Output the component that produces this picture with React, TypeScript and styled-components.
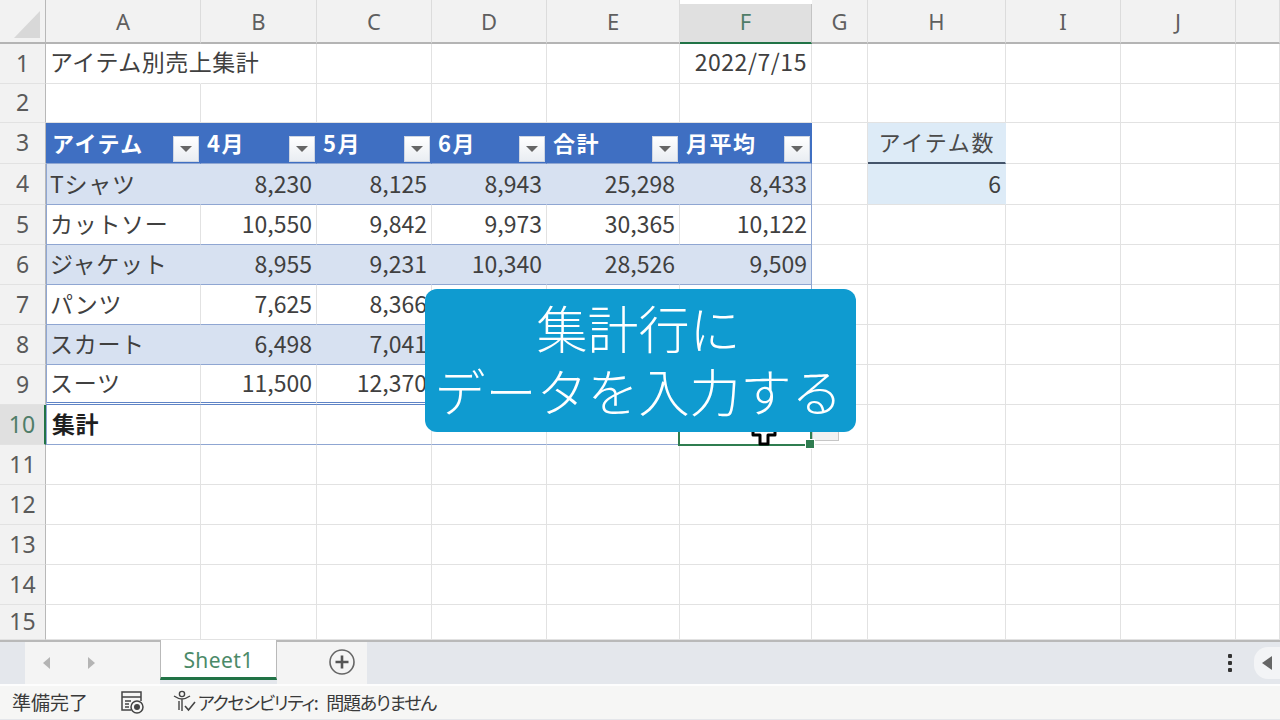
import styled, { createGlobalStyle } from "styled-components";

const GlobalStyle = createGlobalStyle`
  html, body {
    margin: 0;
    padding: 0;
    background: #fff;
  }
  body {
    font-family: "Noto Sans CJK JP", "Noto Sans", sans-serif;
  }
`;

const Page = styled.div`
  width: 1280px;
  height: 720px;
  display: flex;
  flex-direction: column;
  overflow: hidden;
  position: relative;
`;

const Sheet = styled.div`
  height: 640px;
  display: grid;
  grid-template-columns: 46px 155px 116px 115px 115px 133px 132px 56px 138px 115px 115px 44px;
  grid-template-rows: 44px 40px 39px 41px 41px 40px 40px 40px 40px 40px 40px 40px 40px 40px 40px 35px;
  overflow: hidden;
`;

const Corner = styled.div`
  background: #f2f2f2;
  border-right: 1px solid #b8b8b8;
  border-bottom: 2px solid #b4b4b4;
  box-sizing: border-box;
  display: flex;
  align-items: flex-end;
  justify-content: flex-end;
  padding: 0 5px 4px 0;
`;

const CornerMark = styled.div`
  width: 26px;
  height: 27px;
  background: #d8d8d8;
  clip-path: polygon(100% 0, 100% 100%, 0 100%);
`;

const ColHead = styled.div<{ $active?: boolean }>`
  box-sizing: border-box;
  background: ${(p) => (p.$active ? "#e0e0e0" : "#f2f2f2")};
  border-right: 1px solid ${(p) => (p.$active ? "#c4c4c4" : "#dcdcdc")};
  border-bottom: 2px solid ${(p) => (p.$active ? "#217346" : "#b4b4b4")};
  margin-top: ${(p) => (p.$active ? "4px" : "0")};
  padding-top: ${(p) => (p.$active ? "0" : "4px")};
  padding-bottom: 4px;
  display: flex;
  align-items: center;
  justify-content: center;
  font-family: "Noto Sans", sans-serif;
  font-size: 22px;
  color: ${(p) => (p.$active ? "#4f7d68" : "#5f5f5f")};
`;

const RowHead = styled.div<{ $active?: boolean }>`
  box-sizing: border-box;
  background: ${(p) => (p.$active ? "#e0e0e0" : "#f2f2f2")};
  border-right: ${(p) => (p.$active ? "2px solid #217346" : "1px solid #b8b8b8")};
  border-bottom: 1px solid #e2e2e2;
  padding-bottom: 2px;
  display: flex;
  align-items: center;
  justify-content: center;
  font-family: "Noto Sans", sans-serif;
  font-size: 23px;
  color: ${(p) => (p.$active ? "#4f7d68" : "#5a5a5a")};
`;

type Kind = "plain" | "band" | "white" | "total" | "head" | "kpiHead" | "kpi";

const cellBg: Record<Kind, string> = {
  plain: "#fff",
  band: "#d7e1f1",
  white: "#fff",
  total: "#fff",
  head: "#3f6fc2",
  kpiHead: "#ddebf7",
  kpi: "#ddebf7",
};

const tableLine = "#8fa6d2";

const Cell = styled.div<{ $kind?: Kind; $num?: boolean; $open?: boolean; $end?: boolean; $last?: boolean }>`
  position: relative;
  box-sizing: border-box;
  min-width: 0;
  padding: 0 4px 3px 5px;
  display: flex;
  align-items: center;
  justify-content: ${(p) => (p.$num ? "flex-end" : "flex-start")};
  white-space: nowrap;
  font-size: 23px;
  color: #404040;
  background: ${(p) => cellBg[p.$kind ?? "plain"]};
  z-index: ${(p) => (p.$open ? 1 : "auto")};
  border-right: 1px solid
    ${(p) => {
      if (p.$end) return tableLine;
      if (p.$open || p.$kind === "band" || p.$kind === "head") return "transparent";
      if (p.$kind === "kpiHead" || p.$kind === "kpi") return "transparent";
      return "#e2e2e2";
    }};
  border-bottom: ${(p) => {
    if (p.$last) return "3px double #5f84c6";
    if (p.$kind === "kpiHead") return "2px solid #44546a";
    if (p.$kind === "band" || p.$kind === "white" || p.$kind === "total" || p.$kind === "head")
      return `1px solid ${tableLine}`;
    return "1px solid #e2e2e2";
  }};
`;

const TitleCell = styled(Cell)`
  letter-spacing: 0.5px;
  padding-left: 4px;
  padding-bottom: 6px;
`;

const DateCell = styled(Cell)`
  letter-spacing: 0.55px;
  padding-bottom: 6px;
`;

const HeadCell = styled(Cell)`
  color: #fff;
  font-weight: 700;
  font-size: 22px;
  letter-spacing: 1.5px;
  padding: 0 0 3px 6px;
`;

const FirstCell = styled(Cell)`
  border-left: 1px solid ${tableLine};
  padding-left: 3px;
  letter-spacing: 0.7px;
`;

const TotalLabel = styled.span`
  font-weight: 700;
  color: #1f1f1f;
  font-size: 23px;
  letter-spacing: 0.5px;
  margin-left: 2px;
`;

const KpiLabel = styled.span`
  margin: 0 auto;
  font-size: 22px;
  letter-spacing: 1.8px;
  color: #4a4a4a;
`;

const FilterButton = styled.div`
  position: absolute;
  right: 1px;
  bottom: 1px;
  width: 26px;
  height: 26px;
  box-sizing: border-box;
  background: linear-gradient(#ffffff, #e9edf2);
  border: 1px solid #cfd6e2;
  display: flex;
  align-items: center;
  justify-content: center;

  &::after {
    content: "";
    border-left: 6px solid transparent;
    border-right: 6px solid transparent;
    border-top: 6px solid #666;
  }
`;

const Selection = styled.div`
  position: absolute;
  inset: -1px -1px -2px -2px;
  border: 2px solid #2f7d50;
  z-index: 2;

  &::after {
    content: "";
    position: absolute;
    right: -5px;
    bottom: -5px;
    width: 8px;
    height: 8px;
    background: #2f7d50;
    border: 1px solid #fff;
  }
`;

const CellDropButton = styled.div`
  position: absolute;
  left: calc(100% + 1px);
  bottom: 3px;
  width: 27px;
  height: 26px;
  box-sizing: border-box;
  background: #f1f1f1;
  border: 1px solid #c6c6c6;
  z-index: 1;
`;

const Pointer = styled.svg`
  position: absolute;
  left: 70px;
  bottom: -3px;
  width: 28px;
  height: 32px;
  z-index: 3;
`;

const Banner = styled.div`
  position: absolute;
  left: 425px;
  top: 289px;
  width: 431px;
  height: 143px;
  box-sizing: border-box;
  padding: 0 4px 4px 0;
  background: #0f9bd0;
  border-radius: 12px;
  display: flex;
  flex-direction: column;
  align-items: center;
  justify-content: center;
  color: #fff;
  font-size: 51px;
  font-weight: 300;
  line-height: 63px;
  z-index: 5;
`;

const TabBar = styled.div`
  height: 44px;
  box-sizing: border-box;
  display: flex;
  align-items: stretch;
  background: #e4e7ec;
  border-top: 2px solid #b9b9b9;
  position: relative;
`;

const TabNav = styled.div`
  width: 135px;
  margin-left: 25px;
  background: #f4f4f4;
  display: flex;
  align-items: center;
  gap: 34px;
  padding-left: 17px;
  box-sizing: border-box;
`;

const NavArrow = styled.svg`
  width: 10px;
  height: 14px;
  fill: #b4b4b4;
`;

const SheetTab = styled.div`
  width: 117px;
  margin-top: -2px;
  height: 40px;
  box-sizing: border-box;
  padding-top: 3px;
  background: #fff;
  border-left: 1px solid #b9b9b9;
  border-right: 1px solid #b9b9b9;
  border-bottom: 3px solid #217346;
  display: flex;
  align-items: center;
  justify-content: center;
  font-family: "Noto Sans", sans-serif;
  font-size: 21px;
  letter-spacing: 0.4px;
  color: #4b8a68;
`;

const AddArea = styled.div`
  width: 90px;
  box-sizing: border-box;
  background: #f4f4f4;
  display: flex;
  align-items: center;
  justify-content: center;
  padding: 0 0 2px 40px;
`;

const AddIcon = styled.svg`
  width: 28px;
  height: 28px;
`;

const BarEnd = styled.div`
  margin-left: auto;
  display: flex;
  align-items: center;
`;

const Dots = styled.div`
  display: flex;
  flex-direction: column;
  gap: 3px;
  margin-right: 22px;

  span {
    width: 4px;
    height: 4px;
    background: #333;
    border-radius: 1px;
  }
`;

const ScrollPill = styled.div`
  width: 26px;
  height: 32px;
  background: #f3f4f6;
  border-radius: 14px 0 0 14px;
  display: flex;
  align-items: center;
  padding-left: 7px;
  box-sizing: border-box;
`;

const ScrollArrow = styled.svg`
  width: 12px;
  height: 16px;
  fill: #666;
`;

const StatusBar = styled.div`
  flex: 1;
  display: flex;
  align-items: center;
  padding: 0 0 2px 12px;
  background: #f6f6f5;
  border-top: 2px solid #fdfdfd;
  border-bottom: 1px solid #e4e6ea;
  font-size: 19px;
  color: #3a3a3a;
`;

const Ready = styled.span`
  width: 107px;
`;

const MacroIcon = styled.svg`
  width: 26px;
  height: 26px;
  margin-right: 26px;
`;

const AccessIcon = styled.svg`
  width: 26px;
  height: 26px;
  margin-right: 1px;
`;

const AccessText = styled.span`
  font-size: 18px;
  font-feature-settings: "palt";
  letter-spacing: -1.3px;
  word-spacing: 6px;
`;

const columns = ["A", "B", "C", "D", "E", "F", "G", "H", "I", "J", ""];
const tableHeads = ["アイテム", "4月", "5月", "6月", "合計", "月平均"];

const rows: { name: string; values: string[] }[] = [
  { name: "Tシャツ", values: ["8,230", "8,125", "8,943", "25,298", "8,433"] },
  { name: "カットソー", values: ["10,550", "9,842", "9,973", "30,365", "10,122"] },
  { name: "ジャケット", values: ["8,955", "9,231", "10,340", "28,526", "9,509"] },
  { name: "パンツ", values: ["7,625", "8,366", "", "", ""] },
  { name: "スカート", values: ["6,498", "7,041", "", "", ""] },
  { name: "スーツ", values: ["11,500", "12,370", "", "", ""] },
];

const Blank = ({ count }: { count: number }) => (
  <>
    {Array.from({ length: count }, (_, i) => (
      <Cell key={i} />
    ))}
  </>
);

const App = () => {
  return (
    <Page>
      <GlobalStyle />
      <Sheet>
        <Corner>
          <CornerMark />
        </Corner>
        {columns.map((c, i) => (
          <ColHead key={i} $active={c === "F"}>
            {c}
          </ColHead>
        ))}

        <RowHead>1</RowHead>
        <TitleCell $open>アイテム別売上集計</TitleCell>
        <Blank count={4} />
        <DateCell $num>2022/7/15</DateCell>
        <Blank count={5} />

        <RowHead>2</RowHead>
        <Blank count={11} />

        <RowHead>3</RowHead>
        {tableHeads.map((h) => (
          <HeadCell key={h} $kind="head">
            {h}
            <FilterButton />
          </HeadCell>
        ))}
        <Cell />
        <Cell $kind="kpiHead">
          <KpiLabel>アイテム数</KpiLabel>
        </Cell>
        <Blank count={3} />

        {rows.map((r, i) => {
          const kind: Kind = i % 2 === 0 ? "band" : "white";
          const last = i === rows.length - 1;
          return [
            <RowHead key={`h${i}`}>{i + 4}</RowHead>,
            <FirstCell key={`n${i}`} $kind={kind} $last={last}>
              {r.name}
            </FirstCell>,
            ...r.values.map((v, j) => (
              <Cell key={`v${i}-${j}`} $kind={kind} $num $last={last} $end={j === 4}>
                {v}
              </Cell>
            )),
            <Cell key={`g${i}`} />,
            i === 0 ? (
              <Cell key={`k${i}`} $kind="kpi" $num>
                6
              </Cell>
            ) : (
              <Cell key={`k${i}`} />
            ),
            <Blank key={`b${i}`} count={3} />,
          ];
        })}

        <RowHead $active>10</RowHead>
        <FirstCell $kind="total">
          <TotalLabel>集計</TotalLabel>
        </FirstCell>
        <Cell $kind="total" />
        <Cell $kind="total" />
        <Cell $kind="total" />
        <Cell $kind="total" />
        <Cell $kind="total" $end>
          <Selection />
          <CellDropButton />
          <Pointer viewBox="0 0 28 32">
            <path
              d="M10 3h8v8h7v9h-7v9h-8v-9H3v-9h7z"
              fill="#fff"
              stroke="#000"
              strokeWidth="3"
              strokeLinejoin="round"
            />
          </Pointer>
        </Cell>
        <Blank count={5} />

        {[11, 12, 13, 14, 15].map((n) => [
          <RowHead key={n}>{n}</RowHead>,
          <Blank key={`r${n}`} count={11} />,
        ])}
      </Sheet>

      <Banner>
        <div>集計行に</div>
        <div>データを入力する</div>
      </Banner>

      <TabBar>
        <TabNav>
          <NavArrow viewBox="0 0 10 14">
            <path d="M8 1v12L1 7z" />
          </NavArrow>
          <NavArrow viewBox="0 0 10 14">
            <path d="M2 1v12l7-6z" />
          </NavArrow>
        </TabNav>
        <SheetTab>Sheet1</SheetTab>
        <AddArea>
          <AddIcon viewBox="0 0 28 28">
            <circle cx="14" cy="14" r="12" fill="none" stroke="#666" strokeWidth="1.6" />
            <path d="M14 7.5v13M7.5 14h13" stroke="#555" strokeWidth="2.6" />
          </AddIcon>
        </AddArea>
        <BarEnd>
          <Dots>
            <span />
            <span />
            <span />
          </Dots>
          <ScrollPill>
            <ScrollArrow viewBox="0 0 12 16">
              <path d="M11 1v14L1 8z" />
            </ScrollArrow>
          </ScrollPill>
        </BarEnd>
      </TabBar>

      <StatusBar>
        <Ready>準備完了</Ready>
        <MacroIcon viewBox="0 0 26 26">
          <path d="M12 21H3V3h19v9" fill="none" stroke="#444" strokeWidth="1.5" />
          <path d="M3 8h19M6 12h6M6 15h4M6 18h4" stroke="#444" strokeWidth="1.5" />
          <circle cx="18" cy="18" r="6" fill="none" stroke="#444" strokeWidth="1.5" />
          <circle cx="18" cy="18" r="3" fill="#444" />
        </MacroIcon>
        <AccessIcon viewBox="0 0 26 26">
          <circle cx="11" cy="5" r="2.6" fill="none" stroke="#444" strokeWidth="1.4" />
          <path
            d="M3 7c3 2 5 3 8 3s5-1 8-3M11 10v12M8 12v9"
            fill="none"
            stroke="#444"
            strokeWidth="1.4"
          />
          <path d="M14 17l3.5 4L24 13" fill="none" stroke="#444" strokeWidth="1.6" />
        </AccessIcon>
        <AccessText>アクセシビリティ: 問題ありません</AccessText>
      </StatusBar>
    </Page>
  );
};

export default App;
